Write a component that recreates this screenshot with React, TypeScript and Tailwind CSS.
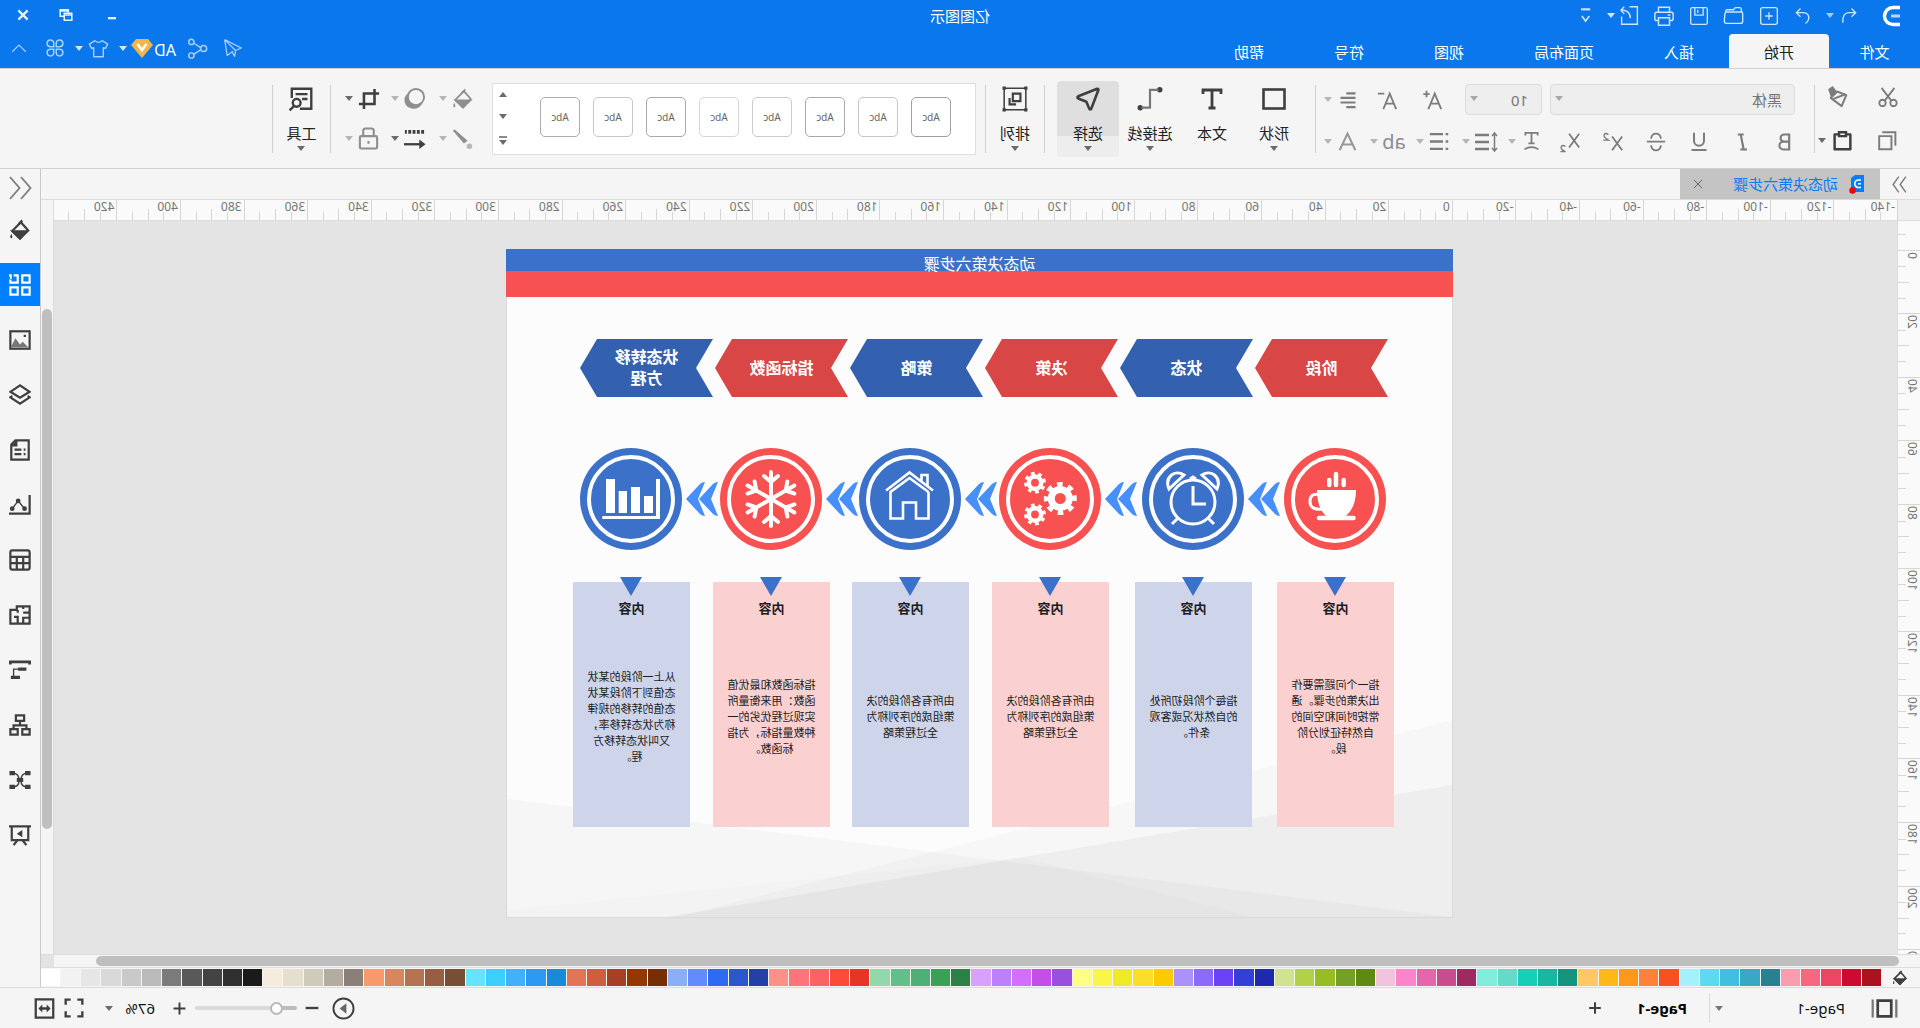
import type { ReactNode } from "react";

type IconProps = {
	size?: number;
	sw?: number;
	className?: string;
	children: ReactNode;
};

// All small icons share a 24 unit grid and inherit the text colour.
function Icon({ size = 22, sw = 2, className = "", children }: IconProps) {
	return (
		<svg
			width={size}
			height={size}
			viewBox="0 0 24 24"
			fill="none"
			stroke="currentColor"
			strokeWidth={sw}
			className={`shrink-0 ${className}`}
			aria-hidden="true"
		>
			{children}
		</svg>
	);
}

function Caret({ className = "text-[#6b6b6b]" }: { className?: string }) {
	return (
		<svg width="8" height="5" viewBox="0 0 8 5" className={`shrink-0 ${className}`} aria-hidden="true">
			<path d="M0 0h8L4 5z" fill="currentColor" />
		</svg>
	);
}

function IconButton({
	label,
	className = "",
	children,
}: {
	label: string;
	className?: string;
	children: ReactNode;
}) {
	return (
		<button
			type="button"
			aria-label={label}
			className={`flex shrink-0 items-center justify-center ${className}`}
		>
			{children}
		</button>
	);
}

function Divider() {
	return <div className="h-[68px] w-px shrink-0 bg-[#cfcfcf]" />;
}

const bucket = (
	<>
		<path d="M11 3.5l9.5 9.5-8.5 8.5L3.5 12z" strokeLinejoin="round" />
		<path d="M4 13.5h16L12 21z" fill="currentColor" />
		<path d="M9.5 1.5l4 4" />
		<path d="M21.5 16c1.5 2.5 1.5 5 0 5s-1.5-2.5 0-5z" fill="currentColor" stroke="none" />
	</>
);

function TitleBar() {
	return (
		<div className="grid h-[34px] grid-cols-[1fr_auto_1fr] items-center text-[#cfe3fb]">
			<div className="flex h-full items-center pb-[3px]">
				<svg width="20" height="22" viewBox="0 0 20 22" className="ml-[19px] text-white" aria-hidden="true">
					<path d="M1 2.5h7a8.5 8.5 0 0 1 0 17H1" fill="none" stroke="currentColor" strokeWidth="3.4" />
					<path d="M1 11h9" stroke="#b9d8ff" strokeWidth="3" />
				</svg>
				<IconButton label="撤销" className="ml-[21px] w-[22px]">
					<Icon size={20} sw={1.6}>
						<path d="M9 3L4 8l5 5M4.5 8H12c5 0 8 4 7.5 12" />
					</Icon>
				</IconButton>
				<Caret className="ml-1 text-[#a9c8ee]" />
				<IconButton label="重做" className="ml-[12px] w-[22px]">
					<Icon size={20} sw={1.6}>
						<path d="M15 3l5 5-5 5M19.5 8H12c-7 0-10 7-3 13" />
					</Icon>
				</IconButton>
				<IconButton label="新建" className="ml-[11px] w-[24px]">
					<Icon size={20} sw={1.6}>
						<rect x="2" y="2" width="20" height="20" rx="2.5" />
						<path d="M12 7.5v9M7.5 12h9" />
					</Icon>
				</IconButton>
				<IconButton label="打开" className="ml-[11px] w-[24px]">
					<Icon size={21} sw={1.6}>
						<path d="M3 8V5q0-2 2-2h5l2 2.5h7q2 0 2 2V8M3 8h16.5q2 0 2.3 2l.7 8q0 3-2.5 3H4q-2.500 0-2.5-2.5V10q0-2 1.5-2z" />
					</Icon>
				</IconButton>
				<IconButton label="保存" className="ml-[11px] w-[24px]">
					<Icon size={20} sw={1.6}>
						<rect x="2" y="2" width="20" height="20" rx="2" />
						<path d="M7 2v9h10V2M13.5 4.5v4" />
					</Icon>
				</IconButton>
				<IconButton label="打印" className="ml-[11px] w-[24px]">
					<Icon size={22} sw={1.6}>
						<path d="M6 8V2.5h12V8M6 17H4q-2 0-2-2v-5q0-2 2-2h16q2 0 2 2v5q0 2-2 2h-2M6 14h12v8H6zM5 11h3" />
					</Icon>
				</IconButton>
				<IconButton label="导出" className="ml-[10px] w-[24px]">
					<Icon size={21} sw={1.6}>
						<path d="M12 2H3v20h18v-9M22 6l-4-4M22 6l-4 4M21.5 6h-3q-7 1-7.5 9" />
					</Icon>
				</IconButton>
				<Caret className="ml-[3px] text-[#d5e6fb]" />
				<IconButton label="更多" className="ml-[11px] w-[20px]">
					<Icon size={20} sw={2}>
						<path d="M7 4h11" strokeWidth="2.6" />
						<path d="M8 12l4.5 6 4.5-6" />
					</Icon>
				</IconButton>
			</div>
			<h1 className="pb-[3px] text-[15px] leading-5 text-white">亿图图示</h1>
			<div className="flex items-center justify-end pb-1 text-[#e6f1fe]">
				<IconButton label="最小化" className="mr-[26px] w-[20px] pt-1">
					<Icon size={14} sw={4}>
						<path d="M5 14h14" />
					</Icon>
				</IconButton>
				<IconButton label="还原" className="mr-[23px] w-[20px]">
					<Icon size={14} sw={2.6}>
						<path d="M2 9h13v12H2zM8 8V3h14v11h-6M2 12h12M8 5h14" />
					</Icon>
				</IconButton>
				<IconButton label="关闭" className="mr-[13px] w-[20px]">
					<Icon size={14} sw={4}>
						<path d="M4 4l16 16M20 4L4 20" />
					</Icon>
				</IconButton>
			</div>
		</div>
	);
}

const tabs = ["插入", "页面布局", "视图", "符号", "帮助"];

function TabBar() {
	return (
		<div className="flex h-[34px] items-stretch text-[15px] leading-5 text-white">
			<button type="button" className="w-[91px] pt-[2px]">
				文件
			</button>
			<button type="button" className="rounded-t-sm bg-[#f5f5f5] px-[35px] pt-[2px] text-[#222]">
				开始
			</button>
			{tabs.map((tab) => (
				<button key={tab} type="button" className="px-[35px] pt-[2px]">
					{tab}
				</button>
			))}
			<div className="ml-auto flex items-center pb-[6px] text-[#a9d0fb]">
				<IconButton label="发送" className="w-[24px]">
					<Icon size={20} sw={1.5}>
						<path d="M22 2L2 12l7 3 1 7 3-5M22 2L9 15M22 2l-3 19-7-5" strokeLinejoin="round" />
					</Icon>
				</IconButton>
				<IconButton label="分享" className="ml-[11px] w-[24px]">
					<Icon size={21} sw={1.7}>
						<circle cx="5" cy="12" r="3.5" />
						<circle cx="19" cy="4.5" r="3" />
						<circle cx="19" cy="20" r="3" />
						<path d="M8.5 11l7.5-5M8.5 13.5l7.5 5" />
					</Icon>
				</IconButton>
				<span className="ml-[10px] pt-1 text-base leading-5 text-white">AD</span>
				<svg width="22" height="20" viewBox="0 0 22 20" className="ml-px" aria-hidden="true">
					<path d="M5 1h12l5 6-11 13L0 7z" fill="#f4b548" />
					<path d="M6.5 6L11 12l4.5-6" fill="none" stroke="#fff" strokeWidth="2.6" />
				</svg>
				<Caret className="ml-[4px] text-[#d5e6fb]" />
				<IconButton label="主题" className="ml-[8px] w-[24px]">
					<Icon size={21} sw={1.6}>
						<path d="M8 3L1.500 7l2.5 5 2.5-1v10.5h11V11l2.5 1L22.5 7 16 3q-4 4-8 0z" strokeLinejoin="round" />
					</Icon>
				</IconButton>
				<Caret className="ml-[4px] text-[#d5e6fb]" />
				<IconButton label="应用" className="ml-[8px] w-[24px]">
					<Icon size={20} sw={1.8}>
						<path d="M10.5 10.5H6A4 4 0 1 1 10.5 6zM13.5 10.5H18A4 4 0 1 0 13.5 6zM10.5 13.5H6a4 4 0 1 0 4.5 4.5zM13.5 13.5H18a4 4 0 1 1-4.5 4.5z" />
					</Icon>
				</IconButton>
				<IconButton label="收起" className="mr-[7px] ml-[12px] w-[24px]">
					<Icon size={18} sw={1.6}>
						<path d="M3 17l9-9 9 9" />
					</Icon>
				</IconButton>
			</div>
		</div>
	);
}

function FormatButton({ label, children }: { label: string; children: ReactNode }) {
	return (
		<IconButton label={label} className="w-[43px]">
			{children}
		</IconButton>
	);
}

function DropIcon({
	label,
	caret = "text-[#b5b5b5]",
	className = "w-[46px]",
	children,
}: {
	label: string;
	caret?: string;
	className?: string;
	children: ReactNode;
}) {
	return (
		<button type="button" aria-label={label} className={`flex shrink-0 items-center ${className}`}>
			<span className="flex w-[26px] justify-center">{children}</span>
			<Caret className={`ml-[3px] ${caret}`} />
		</button>
	);
}

function ClipboardGroup() {
	return (
		<div className="grid w-[105px] shrink-0 grid-cols-[64px_41px] grid-rows-2 text-[#7c7c7c]">
			<IconButton label="剪切" className="h-[43px]">
				<Icon size={22}>
					<circle cx="6" cy="18.5" r="3.5" />
					<circle cx="18" cy="18.5" r="3.5" />
					<path d="M5 2l10.5 14M19 2L8.5 16" />
				</Icon>
			</IconButton>
			<IconButton label="格式刷" className="h-[43px] pr-[5px]">
				<Icon size={22} sw={2.2}>
					<path d="M13 6L3 10l5 12 12-9z" strokeLinejoin="round" />
					<path d="M14 7l4-5.5 3.5 2.5-2.5 7z" fill="currentColor" />
					<path d="M4 9l13 5" />
				</Icon>
			</IconButton>
			<IconButton label="复制" className="h-[43px]">
				<Icon size={21} sw={2.2}>
					<path d="M7.5 7h14v15h-14zM3 18V2.5h15" />
				</Icon>
			</IconButton>
			<IconButton label="粘贴" className="h-[43px] gap-[6px] text-[#3f3f3f]">
				<Icon size={21} sw={2.8}>
					<path d="M7 5H3v17h18V5h-4" strokeLinejoin="round" />
					<path d="M8 2.5h8V7H8z" />
				</Icon>
				<Caret />
			</IconButton>
		</div>
	);
}

function FontGroup() {
	return (
		<div className="flex w-[498px] shrink-0 flex-col pt-1 text-[#7c7c7c]">
			<div className="flex h-[42px] items-center pt-px pl-[19px]">
				<div className="relative">
					<select
						aria-label="字体"
						className="h-[31px] w-[245px] appearance-none rounded-sm border border-[#dcdcdc] bg-[#eee] pl-3 text-[15px] leading-5 text-[#777]"
					>
						<option>黑体</option>
					</select>
					<span className="pointer-events-none absolute top-3 right-[5px] flex">
						<Caret className="text-[#a8a8a8]" />
					</span>
				</div>
				<div className="relative ml-2">
					<select
						aria-label="字号"
						className="h-[31px] w-[77px] appearance-none rounded-sm border border-[#dcdcdc] bg-[#eee] pl-[13px] text-[15px] leading-5 text-[#777]"
					>
						<option>10</option>
					</select>
					<span className="pointer-events-none absolute top-3 right-[5px] flex">
						<Caret className="text-[#a8a8a8]" />
					</span>
				</div>
				<IconButton label="增大字号" className="ml-5 w-[26px]">
					<Icon size={22}>
						<path d="M2 22L9 5l7 17M5 16h8M18 2v7M14.5 5.5h7" />
					</Icon>
				</IconButton>
				<IconButton label="减小字号" className="ml-[19px] w-[26px]">
					<Icon size={22}>
						<path d="M2 22L9 5l7 17M5 16h8M15 5h7" />
					</Icon>
				</IconButton>
				<DropIcon label="对齐" className="ml-[13px] w-[40px]">
					<Icon size={20} sw={2.6}>
						<path d="M3 4h11M3 9.5h18M3 15h18M3 20.5h11" />
					</Icon>
				</DropIcon>
			</div>
			<div className="flex h-[43px] items-center pl-[7px]">
				<FormatButton label="加粗">
					<Icon size={20} sw={2.6}>
						<path d="M7 3h6a4.3 4.3 0 0 1 0 8.6H7zM7 11.6h7a4.6 4.6 0 0 1 0 9.4H7z" />
					</Icon>
				</FormatButton>
				<FormatButton label="倾斜">
					<Icon size={20} sw={2.6}>
						<path d="M10 3h7M6 21h8M13.5 3L10 21" />
					</Icon>
				</FormatButton>
				<FormatButton label="下划线">
					<Icon size={20} sw={2.4}>
						<path d="M6 1v9.5a6 6 0 0 0 12 0V1M3 21.5h18" />
					</Icon>
				</FormatButton>
				<FormatButton label="删除线">
					<Icon size={20} sw={2.2}>
						<path d="M18 8Q17 2 12 2T6 8M6 16q1 6 6 6t6-6M1 11.5h22" />
					</Icon>
				</FormatButton>
				<FormatButton label="上标">
					<Icon size={22}>
						<path d="M2 6l11 15M13 6L2 21" />
						<path d="M17 4q3-2.5 4.5 0T17 10h5.5" strokeWidth="1.5" />
					</Icon>
				</FormatButton>
				<FormatButton label="下标">
					<Icon size={22}>
						<path d="M2 3l11 15M13 3L2 18" />
						<path d="M17 17q3-2.5 4.500 0T17 22.5h5.5" strokeWidth="1.5" />
					</Icon>
				</FormatButton>
				<div className="ml-1 flex">
					<DropIcon label="文字方向">
						<Icon size={21}>
							<path d="M5 5V2h14v3M12 2v12M8.5 14h7M4 21q8-5 16 0" />
						</Icon>
					</DropIcon>
					<DropIcon label="行距">
						<Icon size={24}>
							<path d="M3.5 3v18M1 6l2.5-3L6 6M1 18l2.5 3L6 18" strokeWidth="1.5" />
							<path d="M9 5h14M9 12h14M9 19h14" strokeWidth="2.4" />
						</Icon>
					</DropIcon>
					<DropIcon label="项目符号">
						<Icon size={21} sw={2.6}>
							<path d="M2 3.500h3M2 12h3M2 20.500h3M8 3.500h15M8 12h15M8 20.500h15" />
						</Icon>
					</DropIcon>
					<DropIcon label="英文大小写">
						<span className="text-xl leading-6 text-[#8d8d8d]">ab</span>
					</DropIcon>
					<DropIcon label="字体颜色" className="w-[40px] text-[#999]">
						<Icon size={21} sw={2.4}>
							<path d="M3 22L12 3l9 19M6.500 15.500h11" />
						</Icon>
					</DropIcon>
				</div>
			</div>
		</div>
	);
}

function ToolButton({
	label,
	caret = true,
	active = false,
	className = "w-[62px]",
	children,
}: {
	label: string;
	caret?: boolean;
	active?: boolean;
	className?: string;
	children: ReactNode;
}) {
	return (
		<button
			type="button"
			className={`flex h-[76px] shrink-0 flex-col items-center rounded-sm text-[#3f3f3f] ${className} ${
				active ? "bg-[linear-gradient(#dfdfdf_55px,#ededed_55px)]" : ""
			}`}
		>
			<span className="flex h-[36px] items-center">{children}</span>
			<span className="mt-[6px] text-[15px] leading-5 text-[#222]">{label}</span>
			{caret && <Caret className="mt-[3px] text-[#6b6b6b]" />}
		</button>
	);
}

const galleryBorders = [
	"border-[#a0a0a0]",
	"border-[#c6c6c6]",
	"border-[#a9a9a9]",
	"border-[#cbcbcb]",
	"border-[#d6d6d6]",
	"border-[#a9a9a9]",
	"border-[#c6c6c6]",
	"border-[#acacac]",
];

function StyleGallery() {
	return (
		<div className="ml-[9px] flex h-[72px] w-[484px] shrink-0 items-center border border-[#dedede] bg-white pl-6">
			<div className="mb-1 flex gap-[13px]">
				{galleryBorders.map((border, i) => (
					<button
						key={i}
						type="button"
						className={`size-10 rounded-[5px] border bg-white text-[10px] leading-4 text-[#666] ${border}`}
					>
						Abc
					</button>
				))}
			</div>
			<div className="ml-[33px] flex h-[53px] flex-col items-center justify-between text-[#777]">
				<IconButton label="上一行" className="rotate-180">
					<Caret />
				</IconButton>
				<IconButton label="下一行">
					<Caret />
				</IconButton>
				<IconButton label="展开样式" className="flex-col gap-[2px]">
					<span className="h-[2px] w-2 bg-[#8a8a8a]" />
					<Caret />
				</IconButton>
			</div>
		</div>
	);
}

function Ribbon() {
	return (
		<div className="flex h-[101px] items-center border-y border-[#d0d0d0] bg-[#f5f5f5]">
			<ClipboardGroup />
			<Divider />
			<FontGroup />
			<Divider />
			<div className="mr-[12px] ml-[10px] flex">
				<ToolButton label="形状">
					<Icon size={24} sw={2.6}>
						<rect x="1.5" y="2.5" width="21" height="19" />
					</Icon>
				</ToolButton>
				<ToolButton label="文本" caret={false}>
					<Icon size={24} sw={2.8}>
						<path d="M3 7V3h18v4M12 3v18M8.5 21h7" />
					</Icon>
				</ToolButton>
				<ToolButton label="连接线">
					<Icon size={26}>
						<circle cx="3" cy="3.5" r="2.5" fill="currentColor" stroke="none" />
						<circle cx="21" cy="20" r="2.5" fill="currentColor" stroke="none" />
						<path d="M4 3.5h8V20h8" stroke="#777" />
					</Icon>
				</ToolButton>
				<ToolButton label="选择" active>
					<Icon size={26} sw={2.4}>
						<path d="M3.5 2.5q-1.5 0-1 1.5l6.5 17q1 1.5 1.8 0l2.7-6.5 7.5-3q1.5-.8 0-2z" strokeLinejoin="round" />
					</Icon>
				</ToolButton>
			</div>
			<Divider />
			<ToolButton label="排列" className="w-[58px]">
				<Icon size={26}>
					<path d="M2 2h20v20H2z" strokeWidth="1.4" />
					<path d="M7 7h7v7H7zM17 11v6h-6" />
					<path d="M.5 .5h3v3h-3zM20.5 .5h3v3h-3zM.5 20.5h3v3h-3zM20.5 20.5h3v3h-3z" fill="currentColor" stroke="none" />
				</Icon>
			</ToolButton>
			<Divider />
			<StyleGallery />
			<div className="mr-[12px] ml-[16px] grid grid-cols-[48px_46px_39px] grid-rows-2 text-[#8f8f8f]">
				<DropIcon label="填充" className="h-[40px]">
					<Icon size={22}>{bucket}</Icon>
				</DropIcon>
				<DropIcon label="阴影" className="h-[40px]">
					<Icon size={23} sw={2}>
						<circle cx="10.5" cy="10.5" r="8.5" />
						<path d="M19 10a8.5 8.5 0 0 1-14 7q3 5.5 10 4.5 7-2 6.5-9-.5-3-2.5-4.5z" fill="currentColor" />
					</Icon>
				</DropIcon>
				<DropIcon label="裁剪" caret="text-[#6b6b6b]" className="h-[40px] text-[#3f3f3f]">
					<Icon size={22} sw={2.8}>
						<path d="M6 1v16.5h17M1 6h16.5v17" />
					</Icon>
				</DropIcon>
				<DropIcon label="线条" className="h-[40px]">
					<Icon size={22} sw={2}>
						<path d="M21 1.5q2 0 1.5 2L11 17l-4-3z" fill="currentColor" stroke="none" />
						<circle cx="5" cy="20" r="3" fill="currentColor" stroke="none" opacity=".6" />
					</Icon>
				</DropIcon>
				<DropIcon label="线型" caret="text-[#6b6b6b]" className="h-[40px] text-[#3f3f3f]">
					<Icon size={23} sw={2.4}>
						<path d="M2 5h20" strokeWidth="4" strokeDasharray="3 1.5" />
						<path d="M3 18h20" />
						<path d="M7 13L.5 18 7 23z" fill="currentColor" stroke="none" />
					</Icon>
				</DropIcon>
				<DropIcon label="锁定" className="h-[40px]">
					<Icon size={23} sw={2.2}>
						<rect x="3" y="9.5" width="18" height="13" rx="1.5" />
						<path d="M6.5 9.5V4q0-2.5 2.5-2.5h6q2.5 0 2.5 2.5v5.5M12 14.5v3" />
					</Icon>
				</DropIcon>
			</div>
			<Divider />
			<ToolButton label="工具" className="w-[57px]">
				<Icon size={26} sw={2.2}>
					<path d="M13 21H2.5V2.500h18V11M6 7.5h11M6 12h5" />
					<circle cx="16" cy="15.5" r="3.6" />
					<path d="M18.5 18.5l4 4" />
				</Icon>
			</ToolButton>
			<Divider />
		</div>
	);
}

function DocumentTabs() {
	return (
		<div className="flex h-[30px] items-stretch">
			<IconButton label="展开左侧面板" className="w-[40px] text-[#7c7c7c]">
				<Icon size={17} sw={2}>
					<path d="M3 1l8 11-8 11M13 1l8 11-8 11" />
				</Icon>
			</IconButton>
			<div className="flex w-[200px] items-center bg-[#c4c4c4] pl-[13px]">
				<svg width="18" height="20" viewBox="0 0 18 20" aria-hidden="true">
					<path d="M3 1h9l4 3v14H3z" fill="#0a7cf5" />
					<path d="M6 6h2.5a3.5 3.5 0 0 1 0 7.5H6M6 9.8h3" fill="none" stroke="#fff" strokeWidth="1.6" />
					<circle cx="14.5" cy="16.5" r="3.2" fill="#f40000" />
				</svg>
				<a href="#page-1" className="ml-[11px] text-[15px] leading-5 text-[#0a7cf5]">
					动态决策六步骤
				</a>
				<IconButton label="关闭文档" className="mr-[12px] ml-auto w-[12px] text-[#666]">
					<Icon size={10} sw={2.4}>
						<path d="M2 2l20 20M22 2L2 22" />
					</Icon>
				</IconButton>
			</div>
		</div>
	);
}

const PX_PER_UNIT = 3.18;
const STEP = 20;
const horizontalMarks = Array.from({ length: 29 }, (_, i) => (i - 7) * STEP);
const verticalMarks = Array.from({ length: 13 }, (_, i) => (i - 1) * STEP);

function HorizontalRuler() {
	return (
		<div className="flex h-[22px] overflow-hidden border-y border-[#dcdcdc] bg-[#fafafa]">
			<div className="w-[22px] shrink-0 bg-[#efefef]" />
			<div className="flex min-w-0 flex-1">
				{horizontalMarks.map((mark) => (
					<div
						key={mark}
						className="grid h-full shrink-0 grid-cols-4 grid-rows-1 items-end border-l border-[#d6d6d6]"
						style={{ width: PX_PER_UNIT * STEP }}
					>
						<span className="col-span-4 col-start-1 row-start-1 self-start pl-[2px] text-xs leading-[14px] text-[#757575]">
							{mark}
						</span>
						<div className="col-start-2 row-start-1 h-2 border-l border-[#d6d6d6]" />
						<div className="col-start-3 row-start-1 h-[11px] border-l border-[#d6d6d6]" />
						<div className="col-start-4 row-start-1 h-2 border-l border-[#d6d6d6]" />
					</div>
				))}
			</div>
		</div>
	);
}

function VerticalRuler() {
	return (
		<div className="relative w-[23px] shrink-0 overflow-hidden border-r border-[#dcdcdc] bg-[#fafafa]">
			<div className="absolute inset-x-0 -top-[35px]">
				{verticalMarks.map((mark) => (
					<div
						key={mark}
						className="grid grid-cols-1 grid-rows-4 justify-items-end border-t border-[#d6d6d6]"
						style={{ height: PX_PER_UNIT * STEP }}
					>
						{mark >= 0 && (
							<span className="col-start-1 row-span-4 row-start-1 w-4 rotate-180 justify-self-start self-start pb-px text-xs leading-4 text-[#757575] [writing-mode:vertical-rl]">
								{mark}
							</span>
						)}
						<div className="col-start-1 row-start-2 w-2 border-t border-[#d6d6d6]" />
						<div className="col-start-1 row-start-3 w-[11px] border-t border-[#d6d6d6]" />
						<div className="col-start-1 row-start-4 w-2 border-t border-[#d6d6d6]" />
					</div>
				))}
			</div>
		</div>
	);
}

const cup = (
	<>
		<path d="M30 42h39q0 18-9 26H40q-10-9-10-26z" fill="#fff" />
		<path d="M66 46.5q10-2 10 7t-13 7.5" fill="none" stroke="#fff" strokeWidth="3" />
		<path d="M32.5 70h34.5M42.3 32v5M50 26v11M56.7 32v5" stroke="#fff" strokeWidth="4.5" strokeLinecap="round" />
	</>
);

const clock = (
	<g fill="none" stroke="#fff" strokeWidth="3">
		<circle cx="51" cy="54" r="22" />
		<path d="M51 38v18H38M36 70l-6 6M66 70l6 6M27 41c-5-12 6-20 15-14zM75 41c5-12-6-20-15-14z" />
		<path d="M48 31l3-2 3 2" />
	</g>
);

const gears = (
	<g fill="none" stroke="#fff">
		<circle cx="40.7" cy="50.5" r="9" strokeWidth="7" />
		<circle cx="40.7" cy="50.5" r="14" strokeWidth="5" strokeDasharray="5.5 5.495" strokeDashoffset="2.7" />
		<circle cx="66" cy="34.7" r="6.2" strokeWidth="4.6" />
		<circle cx="66" cy="34.7" r="9.3" strokeWidth="3.2" strokeDasharray="3.65 3.654" />
		<circle cx="66" cy="66.5" r="6.2" strokeWidth="4.6" />
		<circle cx="66" cy="66.5" r="9.3" strokeWidth="3.2" strokeDasharray="3.65 3.654" />
	</g>
);

const house = (
	<g fill="none" stroke="#fff" strokeWidth="2.6">
		<path d="M28 42.5L51.5 24.5 75 42.5M32.5 44L51.5 30 70.5 44v26.5H58V54.5H45v16H32.5V44M33.5 38V27h6v6" />
	</g>
);

const snowflake = (
	<g fill="none" stroke="#fff" strokeWidth="4" strokeLinecap="round">
		{[0, 60, 120, 180, 240, 300].map((angle) => (
			<path key={angle} d="M51 51V24M51 34l-7-6M51 34l7-6" transform={`rotate(${angle} 51 51)`} />
		))}
	</g>
);

const bars = (
	<g fill="#fff">
		<path d="M67 31h9v34h-9zM55 43h8.3v22H55zM42 39h9v26h-9zM29 48h9v17h-9z" />
		<path d="M22 31h4v37h53.7v3H22z" />
	</g>
);

type Step = {
	title: string;
	body: string;
	center: number;
	art: ReactNode;
};

const steps: Step[] = [
	{ title: "阶段", body: "指一个问题需要作出决策的步骤。通常按时间和空间的自然特征划分阶段。", center: 117, art: cup },
	{ title: "状态", body: "指每个阶段初所处的自然状况或客观条件。", center: 259, art: clock },
	{ title: "决策", body: "由所有各阶段的决策组成的序列称为全过程策略", center: 402, art: gears },
	{ title: "策略", body: "由所有各阶段的决策组成的序列称为全过程策略", center: 542, art: house },
	{ title: "指标函数", body: "指标函数和最优值函数：用来衡量所实现过程优劣的一种数量指标，为指标函数。", center: 681, art: snowflake },
	{ title: "状态转移方程", body: "从上一阶段的某状态值到下阶段某状态值的转移的规律称为状态转移率，又叫状态转移方程。", center: 821, art: bars },
];

function StepColumn({ step, index }: { step: Step; index: number }) {
	const red = index % 2 === 0;
	return (
		<div
			className="absolute top-[198px] flex w-[117px] flex-col items-center"
			style={{ left: step.center - 59 }}
		>
			<svg width="102" height="102" viewBox="0 0 102 102" aria-hidden="true">
				<circle cx="51" cy="51" r="51" fill={red ? "#f75151" : "#3c71c9"} />
				<circle cx="51" cy="51" r="42" fill="none" stroke="#fff" strokeWidth="4" />
				{step.art}
			</svg>
			<div
				className={`relative mt-8 flex h-[245px] w-full flex-col items-center ${
					red ? "bg-[#fad0d0]" : "bg-[#ced4ea]"
				}`}
			>
				<svg width="22" height="19" viewBox="0 0 22 19" className="absolute -top-[5px]" aria-hidden="true">
					<path d="M0 0h22L11 19z" fill="#3c71c9" />
				</svg>
				<h3 className="pt-4 text-[13px] leading-5 font-bold text-[#1c1c1c]">内容</h3>
				<div className="flex h-[198px] items-center">
					<p className="w-[92px] text-center text-[11px] leading-4 text-[#1c1c1c]">{step.body}</p>
				</div>
			</div>
		</div>
	);
}

function DiagramPage() {
	return (
		<div
			id="page-1"
			className="relative mt-7 ml-[444px] h-[669px] w-[947px] shrink-0 border border-[#d9d9d9] bg-[#fcfcfc]"
		>
			<svg width="945" height="667" viewBox="0 0 945 667" className="absolute top-0 left-0" aria-hidden="true">
				<path d="M0 470L776 667H0z" fillOpacity=".02" />
				<path d="M945 549L0 667h945z" fillOpacity=".024" />
				<path d="M0 535L785 667H0z" fillOpacity=".034" />
				<path d="M430 607L945 660v7H200z" fillOpacity=".012" />
			</svg>
			<div className="relative -mx-px -mt-px">
				<div className="h-[22px] bg-[#3c71c9]" />
				<div className="h-[26px] bg-[#f75151]" />
				<h2 className="absolute inset-x-0 top-[5px] text-center text-base leading-5 text-white">动态决策六步骤</h2>
			</div>
			<div className="relative mt-[42px] ml-[64px] flex gap-[2px]">
				{steps.map((step, i) => (
					<div
						key={step.title}
						className={`flex h-[58px] w-[133px] items-center justify-center text-center text-base leading-[21px] font-bold text-white [clip-path:polygon(0_0,116px_0,100%_50%,116px_100%,0_100%,17px_50%)] ${
							i % 2 === 0 ? "bg-[#d84646]" : "bg-[#3361b0]"
						}`}
					>
						<span className="w-[72px]">{step.title}</span>
					</div>
				))}
			</div>
			{steps.slice(1).map((step) => (
				<svg
					key={step.title}
					width="33"
					height="34"
					viewBox="0 0 33 34"
					className="absolute top-[232px]"
					style={{ left: step.center - 88 }}
					aria-hidden="true"
				>
					<path
						d="M1 0Q4 0 6 2L20 17 6 32Q4 34 1 34L8 17zM14 0Q17 0 19 2L33 17 19 32Q17 34 14 34L21 17z"
						fill="#478ffa"
					/>
				</svg>
			))}
			{steps.map((step, i) => (
				<StepColumn key={step.title} step={step} index={i} />
			))}
		</div>
	);
}

const palette = [
	"#ad111f", "#cc0b31", "#ec4663", "#f8667f", "#fa9cae",
	"#2a7f91", "#38a8c4", "#40c0de", "#5edaf0", "#a5f0fd",
	"#f75122", "#ff8038", "#ff9718", "#ffb817", "#ffc862",
	"#129680", "#16b8a1", "#18ceb4", "#64dac9", "#82eddb",
	"#9b2b61", "#c84d8e", "#e566ab", "#fb85cb", "#f1c3dd",
	"#5e8a12", "#769f28", "#98bc24", "#b2d147", "#d1e291",
	"#2028b0", "#363ed9", "#6b42f5", "#8d6bfa", "#ab92f8",
	"#fbca00", "#fbdd2b", "#eeea28", "#f9f54a", "#feff82",
	"#9a50df", "#c250e8", "#d36ffc", "#bd80fd", "#daa0ff",
	"#2c7f46", "#3aa055", "#4eb076", "#64be8a", "#92d8ab",
	"#e73427", "#fc4b38", "#fb6265", "#fd757a", "#fe9088",
	"#243fa6", "#2c56d0", "#3069f2", "#628cfd", "#8aaff6",
	"#762e04", "#953700", "#a64025", "#d15d3f", "#e27557",
	"#178ad9", "#2b9af3", "#42b0fd", "#3bcffe", "#66e3ff",
	"#784f36", "#985e41", "#b57351", "#d68760", "#f69a6e",
	"#8a8077", "#b2ad9f", "#cfcbbb", "#e6dfd0", "#f4ecdc",
	"#1a1a1a", "#303030", "#434343", "#595959", "#7b7b7b",
	"#bababa", "#c9c9c9", "#d9d9d9", "#e6e6e6", "#f2f2f2", "#ffffff",
];

function Palette() {
	return (
		<div className="flex h-[20px] items-center border-t border-[#dcdcdc] bg-[#f5f5f5] text-[#3f3f3f]">
			<IconButton label="填充颜色" className="w-[39px]">
				<Icon size={16} sw={2.4}>{bucket}</Icon>
			</IconButton>
			<div className="flex h-[17px] flex-1 gap-px">
				{palette.map((color) => (
					<button
						key={color}
						type="button"
						aria-label={color}
						className="h-full flex-1"
						style={{ backgroundColor: color }}
					/>
				))}
			</div>
		</div>
	);
}

const sideTools: { label: string; art: ReactNode }[] = [
	{ label: "样式", art: bucket },
	{
		label: "符号库",
		art: (
			<path d="M1.5 1.5h8v8h-8zM1.5 14.5h8v8h-8zM14.5 14.5h8v8h-8zM14.5 .5v9h8V6M14 1.5h5M21 1.5h3M21 4h2" />
		),
	},
	{
		label: "图片",
		art: (
			<>
				<rect x="1.5" y="2.5" width="21" height="19" />
				<path d="M3 20l6-6 3 3 5-7 5 10z" fill="#777" stroke="none" />
				<path d="M5.5 7.5H8" />
			</>
		),
	},
	{
		label: "图层",
		art: <path d="M12 1.5l10.5 7L12 15 1.5 8.5zM3.500 13l-2 1.5L12 21.5l10.5-7-2-1.500" />,
	},
	{
		label: "备注",
		art: (
			<>
				<path d="M2.5 1.500H17l4.5 4.5v16.500h-19z" />
				<path d="M16 2v5h5" fill="currentColor" />
				<path d="M6 11.5h2M10.5 11.5H18M6 16.5h2M10.5 16.5H18" />
			</>
		),
	},
	{
		label: "图表",
		art: (
			<>
				<path d="M1.5 1v20.5H24" />
				<path d="M7.5 15.5l6.5-8 6 8" strokeWidth="1.5" />
				<circle cx="7" cy="16" r="2.6" fill="currentColor" stroke="none" />
				<circle cx="14" cy="7.5" r="2.6" fill="currentColor" stroke="none" />
				<circle cx="20.5" cy="16" r="2.6" fill="currentColor" stroke="none" />
			</>
		),
	},
	{
		label: "表格",
		art: (
			<path d="M3.5 1.5h17q2 0 2 2v17q0 2-2 2h-17q-2 0-2-2v-17q0-2 2-2zM1.5 8.5h21M1.5 15.5h21M8.5 8.5v14M15.5 8.5v14" />
		),
	},
	{
		label: "平面图",
		art: <path d="M1.5 2.5h14v4h7v15h-21zM1.5 9.5h7M8.5 2.5v3M1.5 15h7v6.5M14.5 21.5V14h4M14.5 6.5v3" />,
	},
	{
		label: "甘特图",
		art: (
			<>
				<path d="M1.5 6V3h21v3" strokeWidth="3" />
				<path d="M5 11h9M12 20h10" strokeWidth="3.6" />
				<path d="M13 11h6v9" strokeWidth="1.5" />
			</>
		),
	},
	{
		label: "组织架构",
		art: <path d="M7.5 1.5h9v6h-9zM1.5 16.5h8v6h-8zM14.5 16.5h8v6h-8zM12 8v4M5 16v-3.5h14V16" />,
	},
	{
		label: "思维导图",
		art: (
			<>
				<path d="M4 4.5q7 0 7 8 0 7-7 7M20 4.5q-7 0-7 8 0 7 7 7" strokeWidth="1.5" />
				<path d="M.5 4.5h6M17.5 4.5h6M.5 19.5h6M17.5 19.5h6M8.5 12h7" strokeWidth="4.5" />
			</>
		),
	},
	{
		label: "演示",
		art: (
			<>
				<path d="M0 2.5h24M3 3v14.5h18V3M9 18l-4 5M15 18l4 5" />
				<path d="M9.5 6.5l6 4-6 4z" fill="currentColor" stroke="none" />
			</>
		),
	},
];

function SidePanel() {
	return (
		<aside className="flex w-[41px] shrink-0 flex-col border-l border-[#c9c9c9] bg-[#f5f5f5] text-[#3f3f3f]">
			<IconButton label="收起右侧面板" className="h-[33px] pt-1 text-[#7c7c7c]">
				<Icon size={24} sw={1.8}>
					<path d="M11 1L1.5 12 11 23M22 1l-9.5 11L22 23" />
				</Icon>
			</IconButton>
			{sideTools.map((tool, i) => (
				<div key={tool.label} className="flex h-[55px] items-center">
					<IconButton
						label={tool.label}
						className={`h-[43px] w-full ${i === 1 ? "bg-[#0080ff] text-white" : ""}`}
					>
						<Icon size={22} sw={2.4}>
							{tool.art}
						</Icon>
					</IconButton>
				</div>
			))}
		</aside>
	);
}

function StatusBar() {
	return (
		<footer className="flex h-[41px] shrink-0 items-center border-t border-[#dcdcdc] bg-[#f5f5f5] text-[15px] leading-5 text-[#111]">
			<IconButton label="页面缩略图" className="ml-[21px] w-[28px] text-[#3f3f3f]">
				<Icon size={27} sw={2}>
					<path d="M6 5h12v14H6z" strokeWidth="2.4" />
					<path d="M1.5 4v16M22.5 4v16" stroke="#777" />
				</Icon>
			</IconButton>
			<button type="button" className="ml-[26px] flex w-[130px] items-center justify-between text-[#111]">
				Page-1
				<Caret className="text-[#777]" />
			</button>
			<div className="ml-[5px] h-[30px] w-px bg-[#dcdcdc]" />
			<button type="button" className="ml-[22px] font-bold text-black">
				Page-1
			</button>
			<IconButton label="添加页面" className="ml-[34px] w-[16px] text-[#3f3f3f]">
				<Icon size={14} sw={3.4}>
					<path d="M12 2v20M2 12h20" />
				</Icon>
			</IconButton>
			<div className="mr-[34px] ml-auto flex items-center text-[#3f3f3f]">
				<IconButton label="播放">
					<Icon size={23} sw={2}>
						<circle cx="12" cy="12" r="10.5" />
						<path d="M9 6.5l7 5.5-7 5.5z" fill="#666" stroke="none" />
					</Icon>
				</IconButton>
				<IconButton label="缩小" className="ml-[12px] w-[16px]">
					<Icon size={14} sw={4}>
						<path d="M1 12h22" />
					</Icon>
				</IconButton>
				<input
					type="range"
					aria-label="缩放比例"
					min={0}
					max={100}
					defaultValue={16}
					className="ml-[7px] h-1 w-[102px] appearance-none rounded-full bg-[linear-gradient(90deg,#bdbdbd_20px,#dadada_20px)] [&::-webkit-slider-thumb]:size-[13px] [&::-webkit-slider-thumb]:appearance-none [&::-webkit-slider-thumb]:rounded-full [&::-webkit-slider-thumb]:border-2 [&::-webkit-slider-thumb]:border-[#b8b8b8] [&::-webkit-slider-thumb]:bg-white"
				/>
				<IconButton label="放大" className="ml-[8px] w-[14px]">
					<Icon size={13} sw={3.6}>
						<path d="M12 1v22M1 12h22" />
					</Icon>
				</IconButton>
				<button type="button" className="ml-[18px] flex w-[50px] items-center justify-between text-[#111]">
					67%
					<Caret />
				</button>
				<IconButton label="全屏" className="ml-[20px] w-[22px]">
					<Icon size={20} sw={2.8}>
						<path d="M2 8V2h6M16 2h6v6M22 16v6h-6M8 22H2v-6" />
					</Icon>
				</IconButton>
				<IconButton label="适合宽度" className="ml-[7px] w-[22px]">
					<Icon size={21} sw={2.6}>
						<path d="M2 1.5h20v21H2zM7 12h10" />
						<path d="M9.5 7.5L5 12l4.5 4.5zM14.5 7.5L19 12l-4.5 4.5z" fill="currentColor" stroke="none" />
					</Icon>
				</IconButton>
			</div>
		</footer>
	);
}

export default function App() {
	return (
		<div className="flex h-screen -scale-x-100 flex-col overflow-hidden bg-[#f5f5f5] font-['Noto_Sans','Noto_Sans_CJK_SC',sans-serif]">
			<header className="shrink-0">
				<div className="bg-[#0a77ed]">
					<TitleBar />
					<TabBar />
				</div>
				<Ribbon />
			</header>
			<div className="flex min-h-0 flex-1">
				<main className="flex min-w-0 flex-1 flex-col">
					<DocumentTabs />
					<div className="flex min-h-0 flex-1">
						<div className="flex min-w-0 flex-1 flex-col">
							<HorizontalRuler />
							<div className="flex min-h-0 flex-1">
								<VerticalRuler />
								<div className="flex min-w-0 flex-1 overflow-hidden bg-[#e4e4e4]">
									<DiagramPage />
								</div>
							</div>
						</div>
						<div className="w-[13px] shrink-0 border-t border-l border-[#dcdcdc] bg-[#f5f5f5]">
							<div className="mx-px mt-[109px] h-[520px] rounded-full bg-[#bfbfbf]" />
						</div>
					</div>
					<div className="flex h-[13px] shrink-0 border-t border-[#dcdcdc]">
						<div className="flex flex-1 items-center pr-[42px] pl-[21px]">
							<div className="h-[10px] flex-1 rounded-full bg-[#bfbfbf]" />
						</div>
						<div className="w-[13px] bg-[#e4e4e4]" />
					</div>
					<Palette />
				</main>
				<SidePanel />
			</div>
			<StatusBar />
		</div>
	);
}
